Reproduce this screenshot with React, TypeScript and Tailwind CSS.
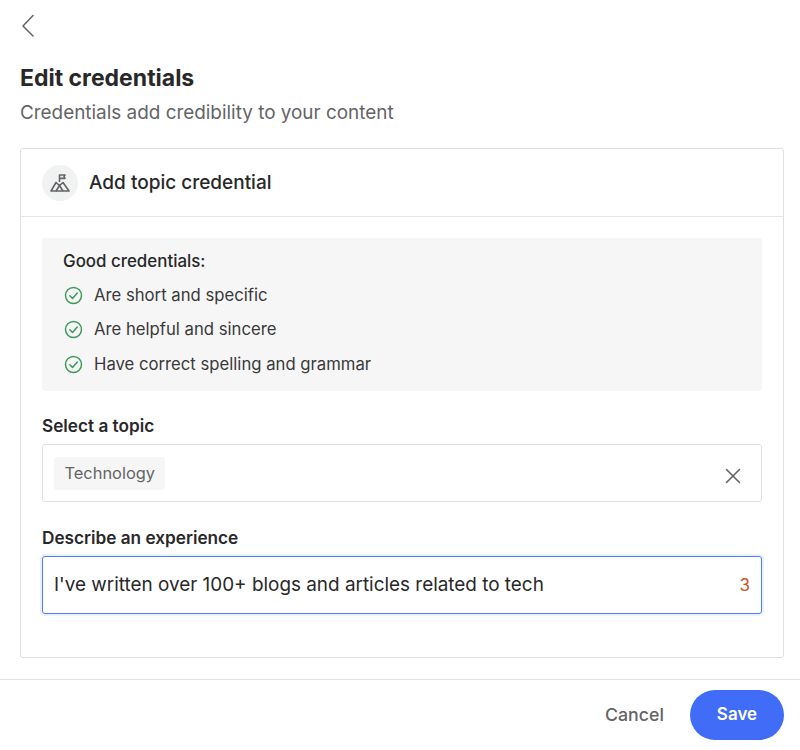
import { X } from "lucide-react";

function Check() {
  return (
    <svg width="19" height="19" viewBox="0 0 19 19" fill="none" stroke="#3f9a5b" strokeWidth="1.5" strokeLinecap="round" strokeLinejoin="round" className="ml-px shrink-0">
      <circle cx="9.5" cy="9.5" r="8" />
      <path d="M5.8 9.7l2.7 2.7 4.8-5.4" />
    </svg>
  );
}

function TopicIcon() {
  return (
    <svg width="20" height="20" viewBox="0 0 20 20" fill="none" stroke="#636466" strokeWidth="1.6" strokeLinejoin="round">
      <path d="M9.5 9V1.5" />
      <path d="M9.5 2h5.5l-1 1.7 1 1.7H9.5" />
      <path d="M1 18l5-8.5 3.5 3 3.5-3 6 8.5z" />
      <path d="M6 18l3.5-5.5L13 18" />
    </svg>
  );
}

const tips = ["Are short and specific", "Are helpful and sincere", "Have correct spelling and grammar"];

export default function App() {
  return (
    <div className="flex h-[750px] w-[800px] flex-col overflow-hidden bg-white font-['Inter',sans-serif] text-[#282829]">
      <div className="flex-1 pr-4 pl-5">
        <div className="flex h-[52px] items-center">
          <svg width="16" height="24" viewBox="0 0 16 24" fill="none" stroke="#636466" strokeWidth="1.5" strokeLinecap="round" strokeLinejoin="round">
            <path d="M13 2.5L3 13l10 10" transform="translate(0 -1)" />
          </svg>
        </div>
        <h1 className="mt-[12px] text-[23px] leading-7 font-bold">Edit credentials</h1>
        <p className="mt-[9px] text-[18.9px] leading-6 text-[#636466]">Credentials add credibility to your content</p>

        <div className="mt-[23px] h-[510px] rounded-[3px] border border-[#dee0e1]">
          <div className="flex h-[68px] items-center gap-[11px] border-b border-[#e6e7e8] pl-[21px]">
            <div className="flex h-9 w-9 items-center justify-center rounded-full bg-[#f1f2f2]">
              <TopicIcon />
            </div>
            <span className="pt-px text-[19px] font-medium">Add topic credential</span>
          </div>
          <div className="px-[21px] pt-[21px]">
            <div className="h-[153px] rounded-[3px] bg-[#f6f6f6] px-[21px] pt-[13px]">
              <p className="text-[16.9px] leading-5 font-medium">Good credentials:</p>
              <ul className="mt-[7px]">
                {tips.map((tip) => (
                  <li key={tip} className="flex h-[34.5px] items-center gap-[11px] text-[16.7px] text-[#39393a]">
                    <Check />
                    {tip}
                  </li>
                ))}
              </ul>
            </div>
            <p className="mt-[25px] text-[17.2px] leading-5 font-semibold">Select a topic</p>
            <div className="mt-[8px] flex h-[58px] items-center justify-between rounded-[3px] border border-[#dee0e1] pr-[15px] pl-[11px]">
              <span className="rounded-[3px] bg-[#f6f6f6] px-[10.5px] py-[6.5px] text-[16.4px] leading-5 text-[#636466]">Technology</span>
              <X size={26} strokeWidth={1.4} color="#636466" className="mt-[5px]" />
            </div>
            <p className="mt-[26px] text-[17.2px] leading-5 font-semibold">Describe an experience</p>
            <div className="mt-[8px] flex h-[58px] items-center justify-between rounded-[3px] border-[1.5px] border-[#4f7cff] px-[11px] shadow-[0_0_0_2px_#ebf0ff]">
              <span className="pt-px text-[18.9px]">I've written over 100+ blogs and articles related to tech</span>
              <span className="pt-px text-[17px] text-[#c9532a]">3</span>
            </div>
          </div>
        </div>
      </div>
      <div className="flex h-[71px] items-center justify-end gap-[26px] border-t border-[#dee0e1] pr-4">
        <span className="text-[17.8px] font-medium text-[#636466]">Cancel</span>
        <button className="h-[50px] w-[94px] rounded-full bg-[#416cf7] text-[17px] font-semibold text-white">Save</button>
      </div>
    </div>
  );
}
